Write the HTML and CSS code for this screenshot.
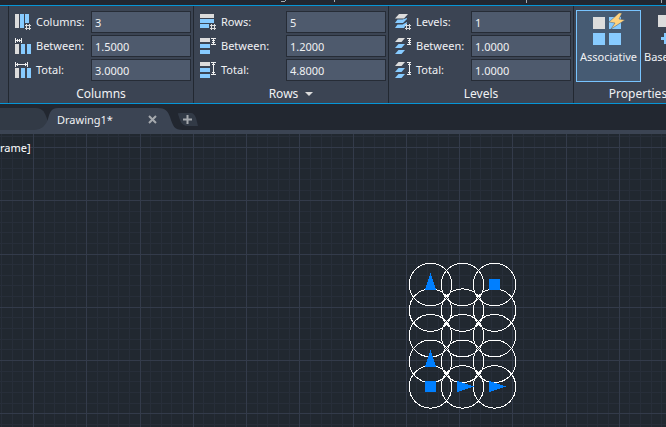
FILE: index.html
```html
<!DOCTYPE html>
<html lang="en">
<head>
<meta charset="utf-8">
<title>Drawing1</title>
<link rel="stylesheet" href="styles.css">
</head>
<body>
<svg class="defs" aria-hidden="true">
  <symbol id="hash" viewBox="0 0 6 6"><path d="M1.5 0V6M4.5 0V6M0 1.5H6M0 4.5H6" stroke="#dcdcdc" fill="none"/></symbol>
</svg>
<header class="menu">
  <svg width="666" height="3" aria-hidden="true"><path d="M281 1h4v1h-4zM285 0h1v1h-1zM334 0h1v2h-1zM526 0h1v3h-1zM661 0h1v3h-1z" fill="#a9adb3"/></svg>
</header>
<section class="ribbon">
  <div class="panel edge"></div>
  <div class="panel">
    <div class="field">
      <svg class="icon" viewBox="0 0 16 16"><path class="g" d="M0 0h4v14H0z"/><path class="b" d="M5 0h4v14H5zM10 0h4v9h-4z"/><use href="#hash" x="10" y="10" width="6" height="6"/></svg>
      <label for="c1">Columns:</label><input id="c1" value="3">
    </div>
    <div class="field">
      <svg class="icon" viewBox="0 0 16 16"><path class="g" d="M0 6h4v10H0z"/><path class="b" d="M6 6h4v10H6zM12 6h4v10h-4z"/><path class="l" d="M.5 0v5M6.5 0v5M0 2.5h7M2.5 1v3M4.5 1v3"/></svg>
      <label for="c2">Between:</label><input id="c2" value="1.5000">
    </div>
    <div class="field">
      <svg class="icon" viewBox="0 0 16 16"><path class="g" d="M0 6h4v10H0z"/><path class="b" d="M6 6h4v10H6zM12 6h4v10h-4z"/><path class="l" d="M.5 0v5M12.5 0v5M0 2.5h13M2.5 1v3M10.5 1v3"/></svg>
      <label for="c3">Total:</label><input id="c3" value="3.0000">
    </div>
    <h2>Columns</h2>
  </div>
  <div class="panel wide">
    <div class="field">
      <svg class="icon" viewBox="0 0 16 16"><path class="g" d="M0 0h14v4H0z"/><path class="b" d="M0 5h14v4H0zM0 10h9v4H0z"/><use href="#hash" x="10" y="10" width="6" height="6"/></svg>
      <label for="r1">Rows:</label><input id="r1" value="5">
    </div>
    <div class="field">
      <svg class="icon" viewBox="0 0 16 16"><path class="g" d="M0 0h10v4H0z"/><path class="b" d="M0 6h10v4H0zM0 12h10v4H0z"/><path class="l" d="M11 .5h5M11 6.5h5M13.500 0v7M12 2.500h3M12 4.500h3"/></svg>
      <label for="r2">Between:</label><input id="r2" value="1.2000">
    </div>
    <div class="field">
      <svg class="icon" viewBox="0 0 16 16"><path class="g" d="M0 0h10v4H0z"/><path class="b" d="M0 6h10v4H0zM0 12h10v4H0z"/><path class="l" d="M11 .5h5M11 12.500h5M13.500 0v13M12 2.500h3M12 10.500h3"/></svg>
      <label for="r3">Total:</label><input id="r3" value="4.8000">
    </div>
    <h2>Rows <svg width="8" height="4" viewBox="0 0 8 4"><path d="M0 0h8L4 4z" fill="#dcdcdc"/></svg></h2>
  </div>
  <div class="panel">
    <div class="field">
      <svg class="icon" viewBox="0 0 16 16"><path class="g smooth" d="M4 0h9L9 4.500H0z"/><path class="b smooth" d="M2.500 5.500h5L12 4v1L8 9H0zM2.500 10.500h5L12 8v1l-3 5H0z"/><use href="#hash" x="10" y="10" width="6" height="6"/></svg>
      <label for="l1">Levels:</label><input id="l1" value="1">
    </div>
    <div class="field">
      <svg class="icon" viewBox="0 0 16 16"><path class="g smooth" d="M3.500 0H10L6.500 4H0z"/><path class="b smooth" d="M3.500 6H10l-3.500 4H0zM3.500 12H10l-3.500 4H0z"/><path class="l" d="M12 .5h4M12 6.500h4M14.500 0v7M13 2.500h3M13 4.500h3"/></svg>
      <label for="l2">Between:</label><input id="l2" value="1.0000">
    </div>
    <div class="field">
      <svg class="icon" viewBox="0 0 16 16"><path class="g smooth" d="M3.500 0H10L6.500 4H0z"/><path class="b smooth" d="M3.500 6H10l-3.500 4H0zM3.500 12H10l-3.500 4H0z"/><path class="l" d="M12 .5h4M12 12.500h4M14.500 0v13M13 2.500h3M13 10.500h3"/></svg>
      <label for="l3">Total:</label><input id="l3" value="1.0000">
    </div>
    <h2>Levels</h2>
  </div>
  <div class="properties">
    <div class="tools">
      <button class="tool on" aria-pressed="true">
        <svg width="32" height="32" viewBox="0 0 32 32"><path class="g" d="M0 4h12v12H0z"/><path class="b" d="M16 4h12v12H16zM0 20h12v12H0zM16 20h12v12H16z"/><path d="M26 0L16 9l6 1-4 6 14-9-6-1 3-6z" fill="#ffd27c" stroke="#465b73" stroke-width=".5"/></svg>
        Associative
      </button>
      <button class="tool">
        <svg width="32" height="32" viewBox="0 0 32 32"><path class="g" d="M4 2h12v12H4z"/><path class="b" d="M10 20h3v4h4v3h-4v4h-3v-4H7v-3h3z"/></svg>
        Base
      </button>
    </div>
    <h2>Properties</h2>
  </div>
</section>
<nav class="tabs">
  <svg class="tab-shape" width="205" height="26" viewBox="0 0 205 26" aria-hidden="true">
    <path d="M0 0H36C43 0 45 5 47 11Q50 22 34 23H0z" fill="#323a46"/>
    <path d="M0 22H35Q45 21 48 11C50 4 51 0 58 0H158C165 0 168 3 170 9C173 18 174 22 183 22H205V26H0z" fill="#3b4453"/>
    <path d="M181 5H191Q194 5 196 10L198 18H188Q182 18 180 12L178 6Q177 5 181 5z" fill="#323a46"/>
  </svg>
  <button class="tab">Drawing1*</button>
  <button class="mark" aria-label="Close"><svg width="9" height="9" viewBox="0 0 9 9"><path d="M1 1l7 7M8 1l-7 7" stroke="#a5a9ae" stroke-width="2"/></svg></button>
  <button class="mark plus" aria-label="New tab"><svg width="9" height="9" viewBox="0 0 9 9"><path d="M4.500 0v9M0 4.500h9" stroke="#a5a9ae" stroke-width="2"/></svg></button>
</nav>
<main class="canvas">
  <svg class="drawing" id="drawing"><path id="minor"/><path id="major"/><g id="circles"></g>
    <path class="grip" d="M425 247h11v11h-11zM489 145h11v11h-11zM425 156l5.500-17 5.500 17zM425 233l5.500-17 5.500 17zM457 247l17 5.500-17 5.500zM489 247l17 5.500-17 5.500z"/>
  </svg>
  <p class="view">rame]</p>
</main>
<script src="drawing.js"></script>
</body>
</html>
```
FILE: styles.css
```css
* { box-sizing: border-box; }
body {
  margin: 0;
  height: 100vh;
  display: flex;
  flex-direction: column;
  overflow: hidden;
  background: #212830;
  color: #f0f1f3;
  font: 12px/16px "Noto Sans", sans-serif;
}
button, input { font: inherit; color: inherit; }
svg { display: block; flex: none; }
.defs { position: absolute; width: 0; height: 0; }
.menu { flex: none; height: 5px; background: #222730; overflow: hidden; }
.ribbon {
  flex: none;
  display: flex;
  background: #3b4453;
  border-top: 1px solid #0696d7;
  border-bottom: 1px solid #0696d7;
  overflow: hidden;
  font-size: 11px;
}
.panel {
  flex: none;
  width: 185px;
  padding: 5px 2px 0 6px;
  border-right: 1px solid #222831;
}
.panel.edge { width: 9px; padding: 0; }
.panel.wide { width: 195px; }
.field { display: flex; align-items: center; height: 22px; margin-bottom: 2px; }
.icon { width: 16px; height: 16px; margin-right: 5px; shape-rendering: crispEdges; }
.field label { flex: 1; }
.field input {
  width: 100px;
  height: 22px;
  padding: 0 3px;
  border: 1px solid #262c36;
  border-radius: 0;
  background: #4e5a6d;
  outline: none;
}
.g { fill: #dcdcdc; }
.b { fill: #87cbff; }
.l { fill: none; stroke: #f0f0f0; }
.smooth { shape-rendering: auto; }
h2 {
  display: flex;
  align-items: center;
  justify-content: center;
  gap: 7px;
  height: 20px;
  margin: 0;
  padding: 2px 4px 0 0;
  font-size: 12px;
  font-weight: 400;
}
.properties { flex: 1; min-width: 130px; padding: 4px 0 0 2px; }
.tools { display: flex; height: 73px; }
.tool {
  flex: none;
  display: flex;
  flex-direction: column;
  align-items: center;
  gap: 4px;
  width: 65px;
  height: 72px;
  padding: 2px 0 0;
  border: 1px solid transparent;
  background: none;
}
.tool.on { background: #465b73; border-color: #78c4ff; }
.tool:not(.on) { align-items: flex-start; padding-left: 2px; }
.tool:not(.on) svg { margin-left: 10px; }
.tabs {
  flex: none;
  position: relative;
  display: flex;
  align-items: center;
  height: 30px;
  padding: 0 0 0 57px;
  border-bottom: 4px solid #3b4453;
  background: #222730;
}
.tab-shape { position: absolute; left: 0; top: 4px; }
.tab, .mark { position: relative; padding: 0; border: 0; background: none; }
.tab { width: 91px; padding-top: 5px; text-align: left; font-size: 11px; }
.mark { padding-top: 4px; }
.plus { margin-left: 26px; }
.canvas { flex: 1; min-height: 0; position: relative; overflow: hidden; }
.drawing { position: absolute; width: 100%; height: 100%; shape-rendering: crispEdges; }
#minor { stroke: #272e39; }
#major { stroke: #333b4a; }
#circles { fill: none; stroke: #fff; }
.grip { fill: #007fff; }
.view { position: relative; margin: 6px 0 0; font-size: 11px; color: #fff; }
```
FILE: drawing.js
```js
const SVG = "http://www.w3.org/2000/svg";
const STEP = 53.25 / 5;

// Builds both grid paths over the visible area of the drawing.
function drawGrid() {
  const { width, height } = document.getElementById("drawing").getBoundingClientRect();
  let major = "", minor = "";
  for (let i = -4; 33 + i * STEP < width; i++) {
    const d = `M${Math.round(33 + i * STEP) + 0.5} 0V${height}`;
    if (i % 5 === 0) major += d; else minor += d;
  }
  for (let i = -1; 13 + i * STEP < height; i++) {
    const d = `M0 ${Math.round(13 + i * STEP) + 0.5}H${width}`;
    if (i % 5 === 0) major += d; else minor += d;
  }
  document.getElementById("major").setAttribute("d", major);
  document.getElementById("minor").setAttribute("d", minor);
}

const circles = document.getElementById("circles");
for (let row = 0; row < 5; row++) {
  for (let col = 0; col < 3; col++) {
    const c = document.createElementNS(SVG, "circle");
    c.setAttribute("cx", 430.5 + col * 32);
    c.setAttribute("cy", 150.5 + row * 25.6);
    c.setAttribute("r", 21.25);
    circles.append(c);
  }
}
drawGrid();
addEventListener("resize", drawGrid);
```
